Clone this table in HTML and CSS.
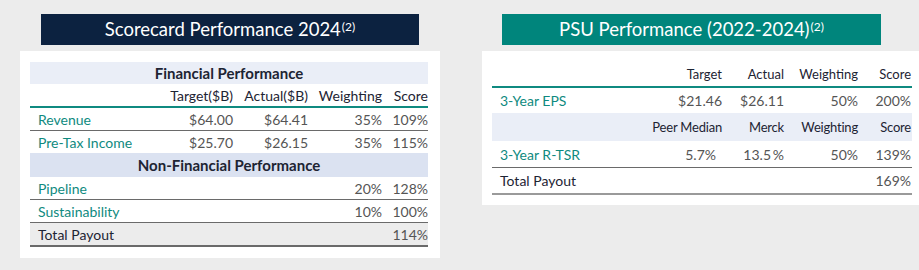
FILE: index.html
```html
<!DOCTYPE html>
<html>
<head>
<meta charset="utf-8">
<link rel="stylesheet" href="styles.css">
</head>
<body>
<div class="page">
  <section class="panel panel-left">
    <div class="title title-navy">Scorecard Performance 2024<sup>(2)</sup></div>
    <div class="card card-left">
      <table class="tbl tbl-left">
        <colgroup>
          <col class="c-label-l"><col class="c-tgt-l"><col class="c-act-l"><col class="c-wt-l"><col class="c-sc-l">
        </colgroup>
        <tr class="section sec-fin"><td colspan="5">Financial Performance</td></tr>
        <tr class="head head-l"><td></td><td>Target($B)</td><td>Actual($B)</td><td>Weighting</td><td>Score</td></tr>
        <tr class="row row-l line"><td class="lbl">Revenue</td><td>$64.00</td><td>$64.41</td><td>35%</td><td>109%</td></tr>
        <tr class="row row-l"><td class="lbl">Pre-Tax Income</td><td>$25.70</td><td>$26.15</td><td>35%</td><td>115%</td></tr>
        <tr class="section sec-nonfin"><td colspan="5">Non-Financial Performance</td></tr>
        <tr class="row row-l line"><td class="lbl">Pipeline</td><td></td><td></td><td>20%</td><td>128%</td></tr>
        <tr class="row row-l line"><td class="lbl">Sustainability</td><td></td><td></td><td>10%</td><td>100%</td></tr>
        <tr class="row row-l total total-l"><td class="tot">Total Payout</td><td></td><td></td><td></td><td>114%</td></tr>
      </table>
    </div>
  </section>
  <section class="panel panel-right">
    <div class="title title-teal">PSU Performance (2022-2024)<sup>(2)</sup></div>
    <div class="card card-right">
      <table class="tbl tbl-right">
        <colgroup>
          <col class="c-label-r"><col class="c-tgt-r"><col class="c-act-r"><col class="c-wt-r"><col class="c-sc-r">
        </colgroup>
        <tr class="head head-r"><td></td><td>Target</td><td>Actual</td><td>Weighting</td><td>Score</td></tr>
        <tr class="row row-r r-eps"><td class="lbl">3-Year EPS</td><td>$21.46</td><td>$26.11</td><td>50%</td><td>200%</td></tr>
        <tr class="head head-peer"><td></td><td>Peer Median</td><td>Merck</td><td>Weighting</td><td>Score</td></tr>
        <tr class="row row-r line r-tsr"><td class="lbl">3-Year R-TSR</td><td class="pad6">5.7%</td><td>13.5&#8201;%</td><td>50%</td><td>139%</td></tr>
        <tr class="row row-r total total-r"><td class="tot">Total Payout</td><td></td><td></td><td></td><td>169%</td></tr>
      </table>
    </div>
  </section>
</div>
</body>
</html>
```

FILE: styles.css
```css
html, body {
  margin: 0;
  padding: 0;
  background: #ececec;
}
body {
  font-family: Lato, "Noto Sans", "Liberation Sans", sans-serif;
  color: #1d2433;
}
.page {
  display: flex;
  gap: 42px;
  padding: 14px 0 0 20px;
  width: 919px;
  box-sizing: border-box;
  overflow: hidden;
}
.panel {
  display: flex;
  flex-direction: column;
  align-items: center;
  flex: none;
}
.panel-left { width: 420px; }
.panel-right { width: 437px; }
.panel-right .title { margin-left: 20px; align-self: flex-start; }

.title {
  height: 31px;
  line-height: 31px;
  color: #fff;
  font-size: 18.5px;
  text-align: center;
  margin-bottom: 6px;
}
.title sup {
  font-size: 12px;
  vertical-align: 0;
  position: relative;
  top: -5px;
  margin-left: 1px;
}
.title-navy { background: #0c2240; width: 378px; }
.title-teal { background: #00857c; width: 379px; }

.card {
  background: #fff;
  box-sizing: border-box;
  width: 100%;
}
.card-left { padding: 11px 12px 11px 10px; }
.card-right { padding: 11px 7px 10px 10px; }

.tbl {
  border-collapse: collapse;
  width: 100%;
  table-layout: fixed;
  font-size: 14px;
}
.tbl td {
  padding: 0 0 0 0;
  text-align: right;
  white-space: nowrap;
  color: #555;
}
.tbl td.lbl {
  text-align: left;
  color: #0f8a80;
  padding-left: 8px;
}
.tbl td.tot {
  text-align: left;
  color: #1d2433;
  padding-left: 8px;
}
.c-label-l { width: 127px; }
.c-tgt-l { width: 76px; }
.c-act-l { width: 77px; }
.c-wt-l { width: 73px; }
.c-sc-l { width: 45px; }

.c-label-r { width: 150px; }
.c-tgt-r { width: 80px; }
.c-act-r { width: 62px; }
.c-wt-r { width: 74px; }
.c-sc-r { width: 54px; }

.section td {
  text-align: center;
  font-weight: bold;
  font-size: 15px;
  color: #1d2433;
}
.sec-fin td { background: #eaeef7; height: 22px; }
.sec-nonfin td { background: #dbe2f1; height: 24px; }

.head td { color: #1d2433; font-size: 13px; }
.head-l td { height: 22px; font-size: 14px; border-bottom: 2px solid #0f8a80; }
.head-r td { height: 24px; border-bottom: 2px solid #0f8a80; }
.head-peer td { background: #eaeef7; height: 28px; letter-spacing: -0.2px; }

.row-l td { height: 22px; }
.row-l.line td { border-bottom: 1px solid #6a6a6a; }
.total-l td { background: #ececec; height: 22px; border-bottom: 2px solid #6a6a6a; }

.row-r td { height: 26px; }
.r-eps td { height: 25px; }
.r-tsr td { border-bottom: 1px solid #6a6a6a; }
.total-r td { height: 25px; border-bottom: 2px solid #9a9a9a; }
.tbl td.pad6 { padding-right: 6px; }
.tbl-right td:nth-child(5) { padding-right: 1px; }
.tbl-left td:nth-child(4) { padding-right: 1px; }
.tbl-left td:nth-child(3) { padding-right: 2px; }
```
